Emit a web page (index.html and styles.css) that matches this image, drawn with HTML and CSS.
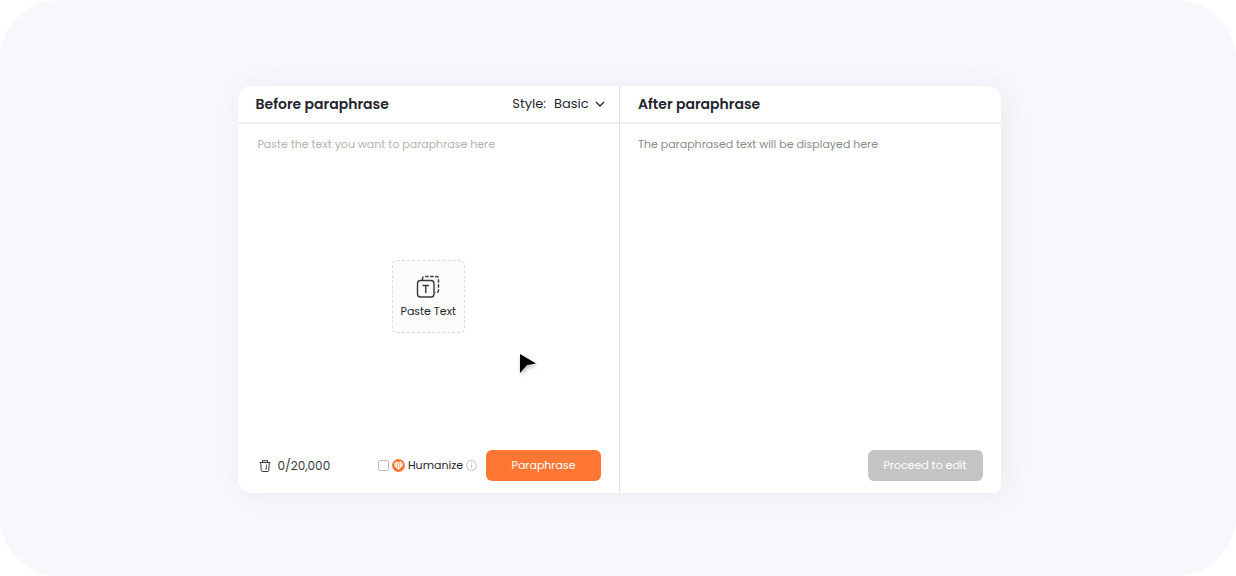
FILE: index.html
```html
<!DOCTYPE html>
<html lang="en">
<head>
<meta charset="UTF-8" />
<meta name="viewport" content="width=device-width, initial-scale=1" />
<title>Paraphrase</title>
<link rel="stylesheet" href="styles.css">
</head>
<body>

<main class="stage">
  <div class="card">

    <section class="panel">
      <header class="panel-header">
        <h2><label for="source">Before paraphrase</label></h2>
        <div class="style-picker">
          <label for="style">Style:</label>
          <select id="style">
            <option>Basic</option>
          </select>
          <svg class="chevron" viewBox="0 0 10 6" aria-hidden="true"><path d="M1 1l4 4 4-4"/></svg>
        </div>
      </header>

      <div class="panel-body">
        <textarea id="source" placeholder="Paste the text you want to paraphrase here"></textarea>
        <button class="paste" type="button">
          <svg class="paste-icon" viewBox="0 0 24 24" aria-hidden="true">
            <path class="dashed" d="M6.5 5V3.5Q6.5 1.5 8.5 1.5H20.5Q22.5 1.5 22.5 3.5V15.5Q22.5 17.5 20.5 17.5H18.5"/>
            <rect x="1.5" y="5.5" width="16.5" height="16.5" rx="3"/>
            <path d="M6.5 10.5h6.5M9.75 10.5v7.5"/>
          </svg>
          Paste Text
        </button>
      </div>

      <footer class="panel-footer">
        <button class="clear" type="button" aria-label="Clear text">
          <svg viewBox="0 0 12 12" aria-hidden="true">
            <path d="M.5 2.5h11M3.5 2.5V.6h5v1.900M1.700 2.500l.6 8q.1 1 1 1h5.400q.9 0 1-1l.6-8"/>
            <path d="M7.500 4.500v4.500H6" stroke-width=".8"/>
          </svg>
        </button>
        <span class="count">0/20,000</span>
        <div class="humanize">
          <input type="checkbox" id="humanize">
          <svg class="badge" viewBox="0 0 14 14" aria-hidden="true">
            <circle cx="7" cy="7" r="7" fill="#ff7733"/>
            <path d="M7 11.500L2.800 7.500Q1.800 6 2.700 4.500Q4 2.700 6 3.200L7 3.700L8 3.200Q10 2.700 11.300 4.500Q12.200 6 11.200 7.500Z" fill="#fff"/>
            <path d="M5.900 3.800v5.700M8.100 3.800v5.700M4.100 4.200v1.600l-1.300.6M9.900 4.200v1.600l1.300.6" fill="none" stroke="#ff7733" stroke-width=".6"/>
          </svg>
          <label for="humanize">Humanize</label>
          <svg class="info" viewBox="0 0 10 10" aria-hidden="true"><circle cx="5" cy="5" r="4.5"/><path d="M5 4.300v3.200M5 2.300v1"/></svg>
        </div>
        <button class="btn btn-primary" type="button">Paraphrase</button>
      </footer>
    </section>

    <section class="panel">
      <header class="panel-header">
        <h2>After paraphrase</h2>
      </header>
      <div class="panel-body">
        <p class="result">The paraphrased text will be displayed here</p>
      </div>
      <footer class="panel-footer panel-footer-end">
        <button class="btn btn-disabled" type="button" disabled>Proceed to edit</button>
      </footer>
    </section>

  </div>

  <svg class="pointer" viewBox="0 0 18 22" aria-hidden="true"><path d="M1 1l16 9.500-9 1.500-7 8z"/></svg>
</main>

</body>
</html>
```
FILE: styles.css
```css
* {
  box-sizing: border-box;
  margin: 0;
  padding: 0;
}

body {
  font-family: Poppins, Inter, sans-serif;
  font-size: 12px;
  color: #25252d;
  background: #fff;
}

button,
select,
textarea {
  font: inherit;
  color: inherit;
  border: none;
  background: none;
}

svg {
  display: block;
  flex: none;
}

/* Rounded backdrop */
.stage {
  position: relative;
  display: flex;
  justify-content: center;
  min-height: 100vh;
  padding: 86px 22px 83px 24px;
  background: #f7f8fc;
  border-radius: 60px;
}

.card {
  display: grid;
  grid-template-columns: 1fr 1fr;
  width: 65%;
  max-width: 763px;
  background: #fff;
  border-radius: 14px 14px 8px 14px;
  box-shadow: 4px 2px 28px rgba(60, 70, 120, 0.07);
}

/* Panels */
.panel {
  display: flex;
  flex-direction: column;
  min-width: 0;
}

.panel + .panel {
  border-left: 1px solid #e2e2e4;
}

.panel-header {
  display: flex;
  align-items: center;
  justify-content: space-between;
  height: 38px;
  padding: 0 14px 0 18px;
  border-bottom: 2px solid #efeff1;
}

h2 {
  font-size: 14px;
  font-weight: 600;
  line-height: 20px;
}

.style-picker {
  display: flex;
  align-items: baseline;
  gap: 8px;
  font-size: 13px;
}

.style-picker select {
  appearance: none;
  margin-right: -20px;
  padding-right: 18px;
}

.chevron {
  align-self: center;
  width: 10px;
  height: 6px;
  fill: none;
  stroke: #25252d;
  stroke-width: 1.3;
  pointer-events: none;
}

.panel-body {
  display: grid;
  flex: 1;
}

.panel-body > * {
  grid-area: 1 / 1;
}

textarea,
.result {
  width: 100%;
  padding: 12px 18px;
  font-size: 11px;
  line-height: 16px;
  resize: none;
}

textarea {
  padding-left: 20px;
  outline: none;
}

textarea::placeholder {
  color: #b3b3b3;
}

.result {
  color: #8c8c8c;
}

.paste {
  display: flex;
  flex-direction: column;
  align-items: center;
  justify-content: center;
  place-self: center;
  gap: 4px;
  width: 73px;
  height: 73px;
  margin-top: 18px;
  padding-top: 2px;
  font-size: 11px;
  line-height: 16px;
  white-space: nowrap;
  background: #fcfcfc;
  border: 1px dashed #dcdcdc;
  border-radius: 5px;
}

.paste-icon {
  width: 24px;
  height: 24px;
  fill: none;
  stroke: #38383c;
  stroke-width: 1.4;
}

.dashed {
  stroke-dasharray: 3.5 1.5;
}

/* Footer controls */
.panel-footer {
  display: flex;
  align-items: center;
  padding: 0 18px 12px 21px;
}

.panel-footer-end {
  justify-content: flex-end;
}

.clear {
  margin-right: 7px;
}

.clear svg {
  width: 12px;
  height: 12px;
  fill: none;
  stroke: #38383c;
}

.count {
  font-size: 12px;
  color: #38383c;
}

.humanize {
  display: flex;
  align-items: center;
  gap: 3px;
  margin: 0 9px 0 auto;
  font-size: 11px;
}

.humanize input {
  appearance: none;
  width: 11px;
  height: 11px;
  border: 1px solid #bdbdbd;
  border-radius: 2px;
}

.humanize input:checked {
  background: #ff7733;
}

.badge {
  width: 13px;
  height: 13px;
}

.info {
  width: 11px;
  height: 11px;
  fill: none;
  stroke: #bdbdbd;
  stroke-width: 0.8;
}

.btn {
  width: 115px;
  height: 31px;
  font-size: 11px;
  color: #fff;
  border-radius: 6px;
}

.btn-primary {
  background: #ff7733;
}

.btn-disabled {
  background: #c4c4c4;
}

/* Mouse pointer floating over the card */
.pointer {
  position: absolute;
  top: 353px;
  left: 42%;
  width: 18px;
  height: 22px;
  fill: #000;
  filter: drop-shadow(1px 2px 2px rgba(0, 0, 0, 0.3));
}
```
